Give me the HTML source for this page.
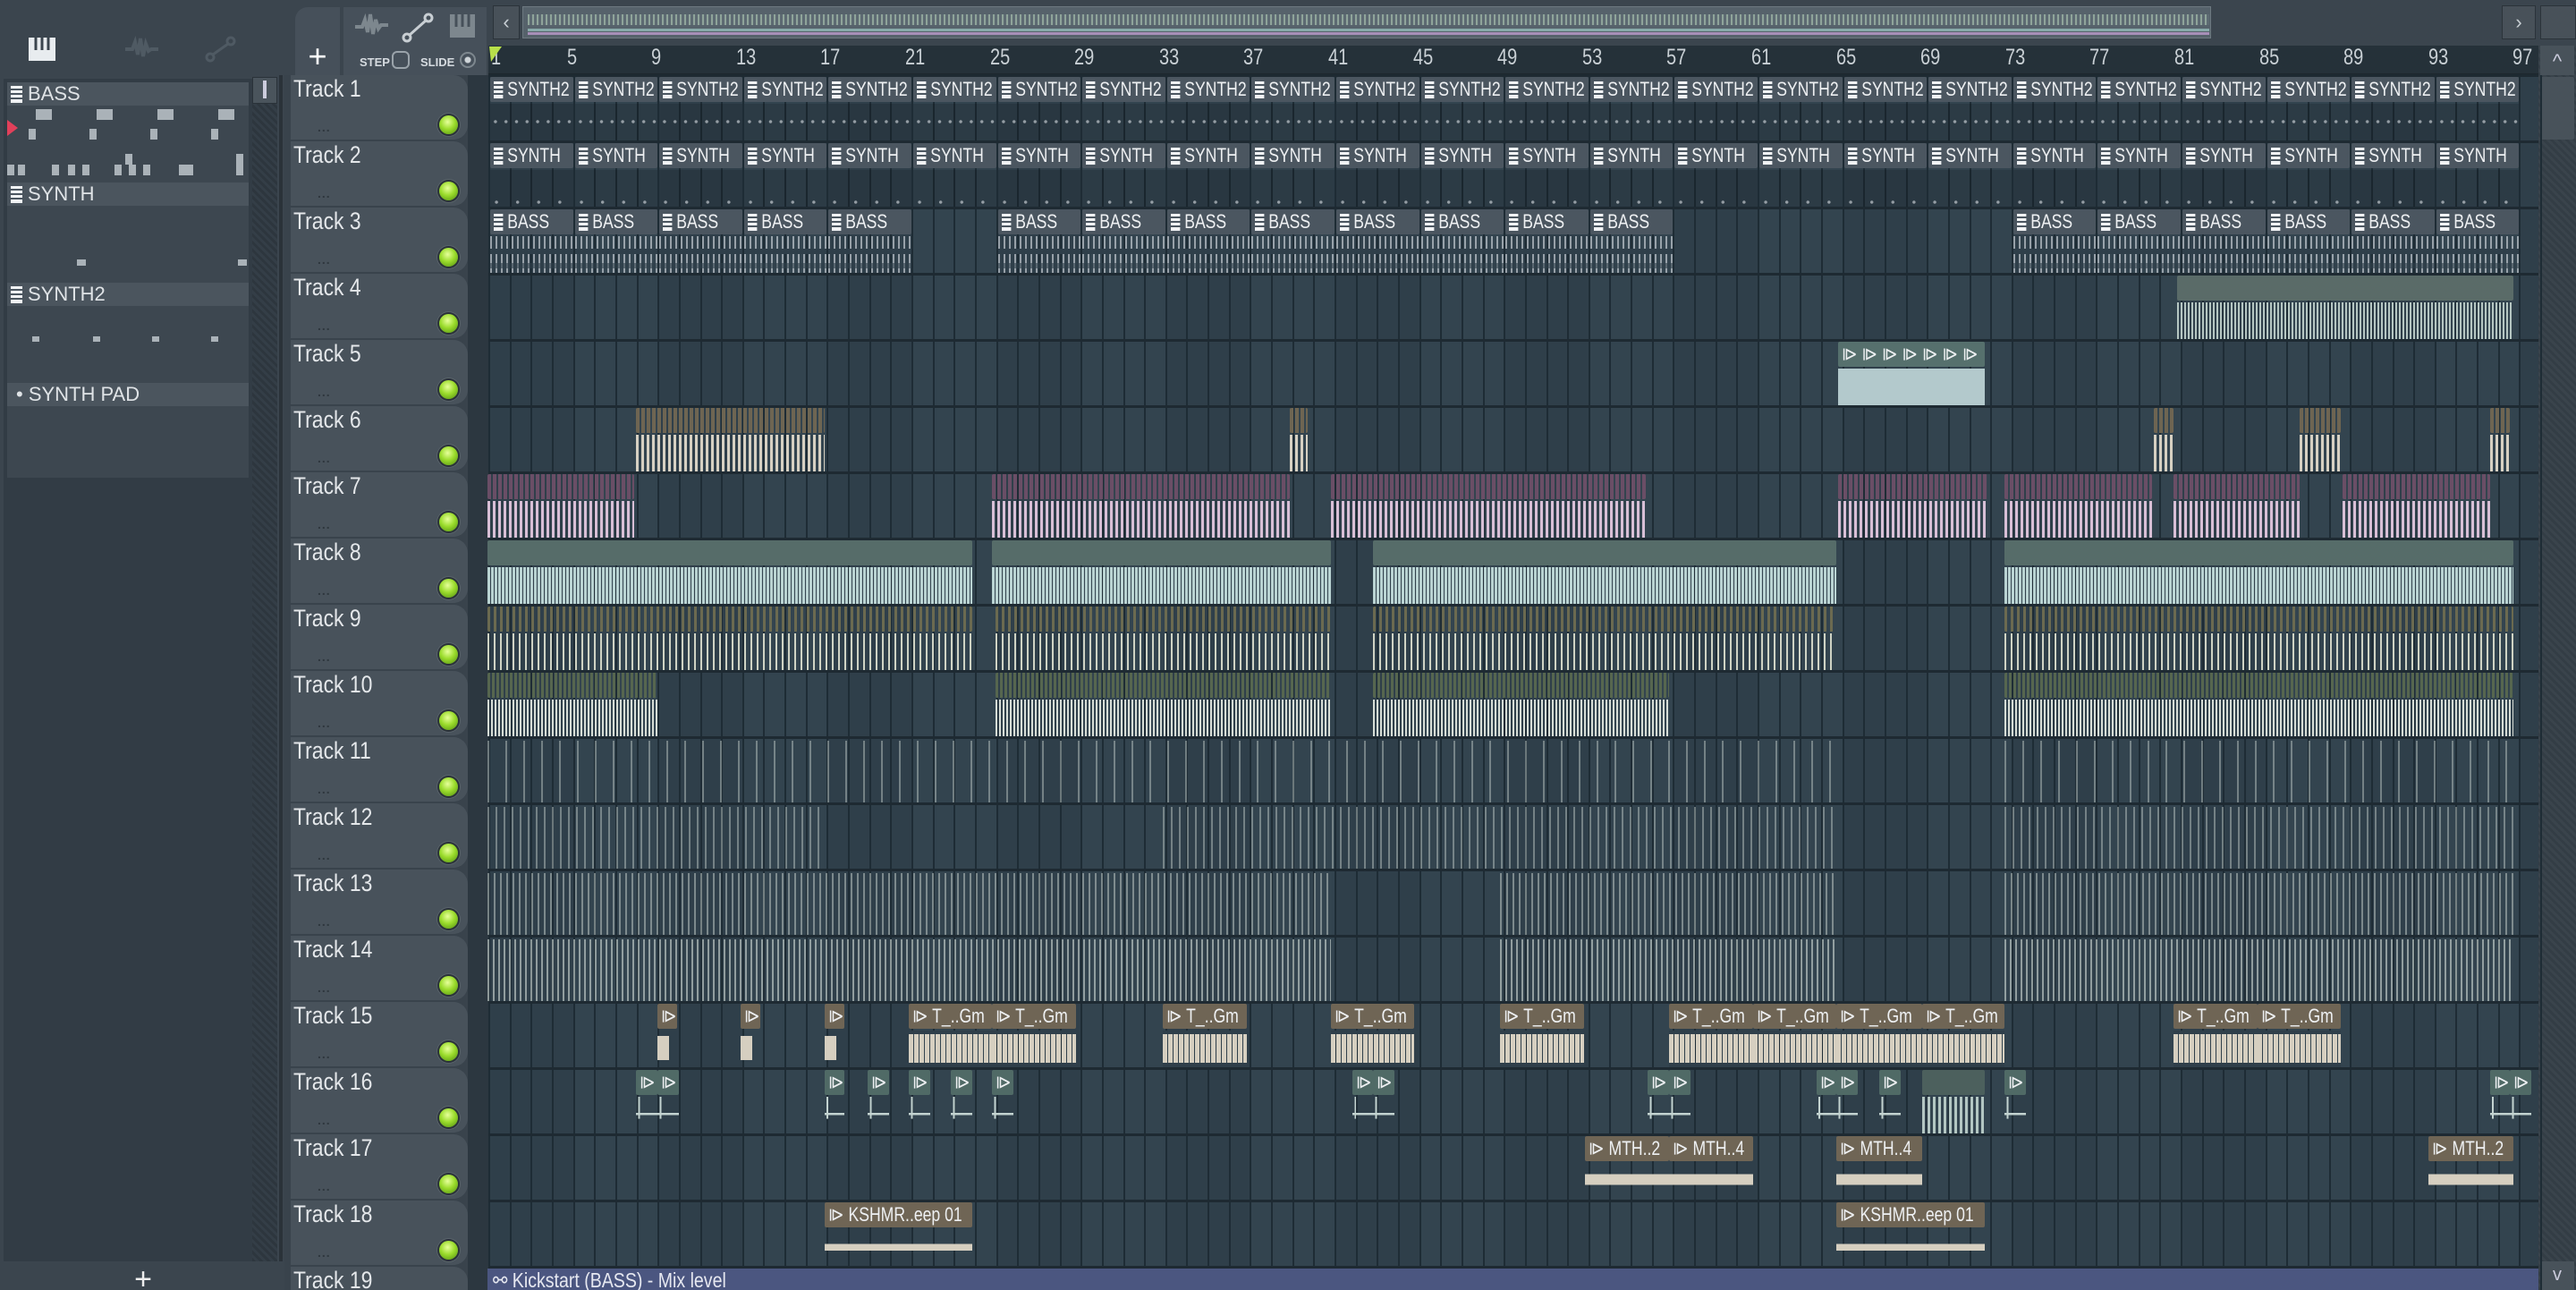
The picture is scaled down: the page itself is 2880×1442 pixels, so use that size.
<!DOCTYPE html>
<html><head><meta charset="utf-8">
<style>
*{margin:0;padding:0;box-sizing:border-box}
html,body{width:2880px;height:1442px;overflow:hidden}
body{background:#3b454e;font-family:"Liberation Sans Narrow","Liberation Sans",sans-serif;color:#dfe3e6;position:relative}
.a{position:absolute}
.th{position:absolute;left:325px;width:198px;height:72px;background:#48525b;border-radius:0 16px 16px 0;}
.th .n{position:absolute;left:3px;top:0px;font-size:27px;color:#e4e7ea;transform:scaleX(.85);transform-origin:left top;white-space:nowrap}
.th .d{position:absolute;left:30px;top:50px;font-size:14px;color:#2f373e;letter-spacing:1px;font-weight:bold}
.led{position:absolute;width:21px;height:21px;border-radius:50%;background:radial-gradient(circle at 45% 35%,#e6ff9a 0,#9bdc2c 45%,#4f8c10 100%);box-shadow:0 0 0 2px #2a3238,0 0 0 3px #58626a}
.clip{position:absolute;overflow:hidden}
.hd{position:absolute;left:0;right:0;top:0;height:28px;border-radius:2px;font-size:22px;color:#eef0f2;white-space:nowrap;overflow:hidden;padding-left:4px;line-height:28px}
.hd span{display:inline-block;transform:scaleX(.8);transform-origin:left center}
.bd{position:absolute;left:0;right:0;top:30px;bottom:0}
.pi{display:inline-block;width:13px;height:19px;vertical-align:-3px;margin-right:6px;background:linear-gradient(#f0f2f4 0 3px,#4b5660 3px 5px,#f0f2f4 5px 8px,#4b5660 8px 10px,#f0f2f4 10px 13px,#4b5660 13px 15px,#f0f2f4 15px)}
.rn{position:absolute;top:50px;font-size:25px;color:#c9d0d5;transform:scaleX(.8);transform-origin:left top}
.lp{position:absolute;left:8px;width:270px;font-size:22px}
</style></head><body>
<div class="a" style="left:0;top:0;width:2880px;height:84px;background:#3b454e"></div>
<div class="a" style="left:546px;top:51px;width:2292px;height:33px;background:#253139"></div>
<div class="a" style="left:546px;top:82px;width:2292px;height:3px;background:#1d272e"></div>
<div class="a" style="left:551px;top:6px;width:30px;height:38px;background:#485159;border:1px solid #2b333a;color:#c8cfd4;font-size:22px;text-align:center;line-height:36px">‹</div>
<div class="a" style="left:584px;top:7px;width:1888px;height:36px;background:#56626b;border:1px solid #6d7980"></div>
<div class="a" style="left:590px;top:16px;width:1880px;height:12px;background:repeating-linear-gradient(90deg,#8fa49a 0 2px,#5d6a72 2px 5px)"></div>
<div class="a" style="left:590px;top:32px;width:1880px;height:3px;background:#8aa"></div>
<div class="a" style="left:590px;top:36px;width:1880px;height:3px;background:#a78fb8"></div>
<div class="a" style="left:2797px;top:6px;width:38px;height:38px;background:#485159;border:1px solid #2b333a;color:#c8cfd4;font-size:22px;text-align:center;line-height:36px">›</div>
<div class="a" style="left:2840px;top:6px;width:40px;height:38px;background:#485159;border:1px solid #2b333a"></div>
<div class="a" style="left:330px;top:8px;width:50px;height:76px;background:#46505a;border-radius:14px 0 0 0;color:#fff;font-size:36px;text-align:center;line-height:110px">+</div>
<div class="a" style="left:384px;top:8px;width:160px;height:76px;background:#46505a"></div>
<div class="a" style="left:402px;top:62px;font-size:13px;color:#d6dbe0;font-weight:bold">STEP</div>
<div class="a" style="left:438px;top:57px;width:20px;height:20px;border:2px solid #9aa3aa;border-radius:6px"></div>
<div class="a" style="left:470px;top:62px;font-size:13px;color:#d6dbe0;font-weight:bold">SLIDE</div>
<div class="a" style="left:514px;top:58px;width:18px;height:18px;border:2px solid #7d878e;border-radius:50%;background:radial-gradient(#cfd5d9 0 3px,transparent 4px)"></div>
<svg class="a" style="left:395px;top:12px" width="140" height="36"><path d="M2 18h8l3-8 3 14 3-20 3 22 3-16 3 10 3-4h8" stroke="#7d878e" stroke-width="4" fill="none"/><circle cx="60" cy="30" r="4" fill="none" stroke="#c8ced3" stroke-width="3"/><circle cx="84" cy="8" r="4" fill="none" stroke="#c8ced3" stroke-width="3"/><path d="M63 27L81 11" stroke="#c8ced3" stroke-width="3"/><rect x="108" y="4" width="28" height="26" fill="#7d878e"/><path d="M115 4v14M122 4v14M129 4v14" stroke="#46505a" stroke-width="3"/></svg>
<svg class="a" style="left:30px;top:40px" width="240" height="30"><rect x="2" y="2" width="30" height="26" fill="#e8ecef"/><path d="M10 2v14M17 2v14M24 2v14" stroke="#3b454e" stroke-width="3"/><path d="M110 15h8l3-8 3 14 3-18 3 20 3-14 3 8 3-2h8" stroke="#4f5a63" stroke-width="4" fill="none"/><circle cx="205" cy="24" r="4" fill="none" stroke="#4f5a63" stroke-width="3"/><circle cx="228" cy="6" r="4" fill="none" stroke="#4f5a63" stroke-width="3"/><path d="M208 21L225 9" stroke="#4f5a63" stroke-width="3"/></svg>
<div class="a" style="left:0;top:84px;width:316px;height:1358px;background:#3b454e;border-right:4px solid #2a3239"></div>
<div class="a" style="left:4px;top:88px;width:280px;height:1322px;background:#323c45"></div>
<div class="a" style="left:282px;top:88px;width:28px;height:1322px;background:repeating-linear-gradient(45deg,#2d363e 0 3px,#343e47 3px 6px)"></div>
<div class="a" style="left:282px;top:86px;width:28px;height:30px;background:#4a545c;border:1px solid #2a3239"></div>
<div class="a" style="left:294px;top:90px;width:4px;height:20px;background:#ccd"></div>
<div class="a" style="left:4px;top:1410px;width:312px;height:32px;background:#3b454e;color:#eee;font-size:34px;text-align:center;line-height:40px">+</div>
<div class="lp" style="top:92px;height:26px;background:#4b555e;padding-left:4px;line-height:26px"><span class="pi"></span>BASS</div>
<div class="lp" style="top:118px;height:86px;background:#3d4750"></div>
<div class="lp" style="top:204px;height:26px;background:#4b555e;padding-left:4px;line-height:26px"><span class="pi"></span>SYNTH</div>
<div class="lp" style="top:230px;height:86px;background:#3d4750"></div>
<div class="lp" style="top:316px;height:26px;background:#4b555e;padding-left:4px;line-height:26px"><span class="pi"></span>SYNTH2</div>
<div class="lp" style="top:342px;height:86px;background:#3d4750"></div>
<div class="lp" style="top:428px;height:26px;background:#4b555e;padding-left:10px;line-height:26px">• SYNTH PAD</div>
<div class="lp" style="top:454px;height:80px;background:#3d4750"></div>
<div id="lpn"></div>
<svg class="a" style="left:6px;top:132px" width="16" height="22"><path d="M2 2L14 11L2 20Z" fill="#e2405a"/></svg>
<div class="a" style="left:318px;top:84px;width:228px;height:1358px;background:#39434c"></div>
<div class="a" style="left:523px;top:84px;width:23px;height:1358px;background:#2c3740"></div>
<div class="a" style="left:546px;top:84px;width:2292px;height:1358px;background:#2f3f4a"></div>
<div class="a" style="left:2838px;top:51px;width:42px;height:1391px;background:repeating-linear-gradient(45deg,#333d45 0 3px,#3a444c 3px 6px)"></div>
<div class="a" style="left:2840px;top:51px;width:38px;height:33px;background:#48525a;color:#ccd;font-size:22px;text-align:center;line-height:36px">^</div>
<div class="a" style="left:2840px;top:86px;width:38px;height:70px;background:#48525a;border-radius:2px"></div>
<div class="a" style="left:2840px;top:1410px;width:38px;height:32px;background:#48525a;color:#ccd;font-size:20px;text-align:center;line-height:30px">v</div>
<div id="c"></div>
<script>
const D=v=>v*1.8367, T=n=>84+(n-1)*74, BX=b=>547+(b-1)*23.65;
let h='';
for(let g=0;g<24;g++){ if(g%2) h+=`<div class="a" style="left:${BX(1+g*4)}px;top:84px;width:${23.65*4}px;height:1358px;background:#33444f"></div>`;}
for(let b=1;b<=98;b++) h+=`<div class="a" style="left:${BX(b)-1}px;top:84px;width:2px;height:1358px;background:#1e2c35"></div>`;
for(let n=1;n<=19;n++) h+=`<div class="a" style="left:546px;top:${T(n)-1}px;width:2292px;height:3px;background:#1e2a32"></div>`;
for(let b=1;b<=97;b+=4) h+=`<div class="rn" style="left:${BX(b)+(b==1?2:-8)}px">${b}</div>`;
h+=`<svg class="a" style="left:546px;top:51px" width="16" height="20"><path d="M1 1h14L3 18Z" fill="#b8e04a"/></svg>`;
for(let n=1;n<=19;n++){const t=T(n);h+=`<div class="th" style="top:${t}px"><div class="n">Track ${n}</div><div class="d">...</div></div>`;if(n<19)h+=`<div class="led" style="left:491px;top:${t+45}px"></div>`;}
function clip(x1,x2,n,hc,body,label){const t=T(n)+2;const L=D(x1),W=D(x2)-D(x1);
 h+=`<div class="clip" style="left:${L}px;top:${t}px;width:${W}px;height:71px">`;
 if(hc) h+=`<div class="hd" style="background:${hc}"><span>${label||''}</span></div>`;
 h+=`<div class="bd" style="${hc?'':'top:2px;'}background:${body}"></div></div>`;}
const stripe=(c,w,g)=>`repeating-linear-gradient(90deg,${c} 0 ${w}px,transparent ${w}px ${g}px)`;
const P='<i class="pi"></i>';
const dots=(y)=>`radial-gradient(circle at 50% ${y}px,rgba(220,225,230,.6) 0 1.5px,transparent 2px) 0 0/11.8px 100%`;
for(let i=0;i<24;i++){const b=1+i*4;const x1=(BX(b)+1)/1.8367,x2=(BX(b+4)-1)/1.8367;
 clip(x1,x2,1,'#4b5660',`${dots(20)},rgba(0,0,0,.12)`,P+'SYNTH2');
 clip(x1,x2,2,'#4b5660',`radial-gradient(circle at 30% 36px,rgba(220,225,230,.6) 0 1.5px,transparent 2px) 0 0/23.6px 100%,rgba(0,0,0,.12)`,P+'SYNTH');}
let bass=[1,5,9,13,17,25,29,33,37,41,45,49,53,73,77,81,85,89,93];
for(const b of bass) clip((BX(b)+1)/1.8367,(BX(b+4)-1)/1.8367,3,'#4b5660',`linear-gradient(transparent 0 3px,transparent 14px,rgba(47,63,74,1) 14px 20px,transparent 20px 30px,rgba(47,63,74,.6) 30px 36px,transparent 36px),${stripe('rgba(220,225,230,.6)',2,6)}`,P+'BASS');
clip(1325,1530,4,'#5a6b68',stripe('#b5c6c2',2,4));
clip(1119,1208,5,'#56706d','#b3c9cc','⧐ ⧐ ⧐ ⧐ ⧐ ⧐ ⧐');
for(const [a,b] of [[387,502],[785,796],[1311,1323],[1400,1425],[1516,1528]]) clip(a,b,6,stripe('#6e6552',4,6),stripe('#d6d0c2',3,6));
for(const [a,b] of [[297,386],[604,785],[810,1002],[1119,1210],[1220,1310],[1323,1400],[1426,1516]]) clip(a,b,7,stripe('#6a4e66',4,6),stripe('#d8bfd6',3,6));
for(const [a,b] of [[297,592],[604,810],[836,1118],[1220,1530]]) clip(a,b,8,'#566c69',stripe('#b9d3d2',3,4));
for(const [a,b] of [[297,592],[606,810],[836,1118],[1220,1530]]) clip(a,b,9,stripe('#6b6a50',3,7),stripe('#cfd3c4',2,7));
for(const [a,b] of [[297,400],[606,810],[836,1016],[1220,1530]]) clip(a,b,10,stripe('#56664f',3,5),stripe('#d6ddd6',2,4));
for(const [a,b] of [[297,1118],[1220,1530]]) clip(a,b,11,null,stripe('rgba(200,210,205,.45)',2,20));
for(const [a,b] of [[297,502],[708,1118],[1220,1530]]) clip(a,b,12,null,stripe('rgba(200,210,205,.45)',2,9));
for(const [a,b] of [[297,810],[913,1118],[1220,1530]]) clip(a,b,13,null,stripe('rgba(200,210,205,.5)',2,7));
for(const [a,b] of [[297,810],[913,1118],[1220,1530]]) clip(a,b,14,null,stripe('rgba(210,220,215,.6)',2,6));
for(const [a,b] of [[400,412],[451,463],[502,514]]) clip(a,b,15,'#6f6555','linear-gradient(transparent 15%,#d6cfc0 15% 80%,transparent 80%) 0 0/60% 100% no-repeat','⧐');
for(const [a,b] of [[553,604],[604,655],[708,759],[810,861],[913,964],[1016,1067],[1067,1118],[1118,1170],[1170,1220],[1323,1374],[1374,1425]]) clip(a,b,15,'#6f6555',`linear-gradient(#2f3f4a 0 10%,transparent 10% 88%,#2f3f4a 88%),${stripe('#d6cfc0',5,6)}`,'⧐ T_..Gm');
for(const [a,b] of [[387,400],[400,413],[502,514],[528,541],[553,566],[579,592],[604,617],[823,836],[836,849],[1003,1016],[1016,1029],[1106,1118],[1118,1131],[1144,1157],[1220,1233],[1516,1528],[1528,1541]]) clip(a,b,16,'#506a66','linear-gradient(90deg,transparent 10%,#c3d3d0 10% 18%,transparent 18%) 0 0/100% 60% no-repeat,linear-gradient(transparent 44%,#c3d3d0 44% 50%,transparent 50%)','⧐');
clip(1170,1208,16,'#4c605d',stripe('#b3c6c2',3,6));
for(const [a,b,l] of [[965,1016,'MTH..2'],[1016,1067,'MTH..4'],[1118,1170,'MTH..4'],[1478,1530,'MTH..2']]) clip(a,b,17,'#6f6555','linear-gradient(transparent 30%,#d6cfc0 30% 60%,transparent 60%)','⧐ '+l);
for(const [a,b] of [[502,592],[1118,1208]]) clip(a,b,18,'#6f6555','linear-gradient(transparent 40%,#d6cfc0 40% 58%,transparent 58%)','⧐ KSHMR..eep 01');
h+=`<div class="a" style="left:${D(297)}px;top:${T(19)+2}px;width:${2838-D(297)}px;height:24px;background:#4b5680;font-size:23px;line-height:26px;padding-left:6px;color:#e6e8f0;overflow:hidden"><span style="display:inline-block;transform:scaleX(.85);transform-origin:left">⚯ Kickstart (BASS) - Mix level</span></div>`;
document.getElementById('c').innerHTML=h;
let l='';const sq=(x,y,w,hh)=>l+=`<div class="a" style="left:${x}px;top:${y}px;width:${w}px;height:${hh}px;background:#aab2b8"></div>`;
[40,108,176,244].forEach(x=>{sq(x,122,18,12);sq(x-8,144,8,12)});
[8,20,58,76,92,128,144,160,200,208,264].forEach((x,i)=>sq(x,184,8,12));sq(140,172,8,12);sq(264,172,8,12);
sq(86,290,10,7);sq(266,290,10,7);
[36,104,170,236].forEach(x=>sq(x,376,8,6));
document.getElementById('lpn').innerHTML=l;
</script>
</body></html>
